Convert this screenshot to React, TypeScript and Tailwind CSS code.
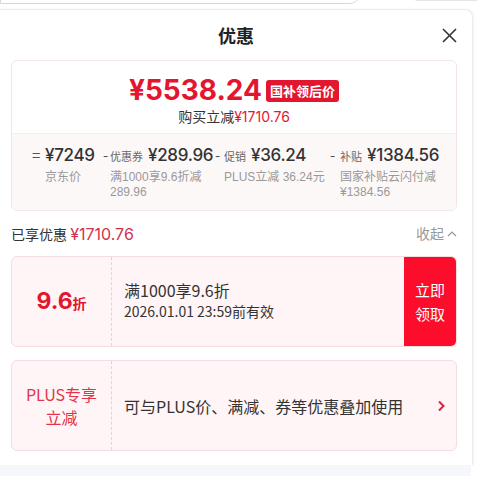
import React from "react";

const CJK = '"Noto Sans CJK SC", "Noto Sans", sans-serif';
const NUM = 'Inter, "Noto Sans CJK SC", sans-serif';
const DESC = '"Liberation Sans", "Noto Sans CJK SC", sans-serif';

function Col({ op, opW, label, value, desc, w }: { op: string; opW: number; label?: string; value: string; desc: string[]; w: number }) {
  return (
    <div className="flex flex-col shrink-0" style={{ width: w }}>
      <div className="flex items-baseline h-[24px] whitespace-nowrap">
        <span className="text-[15px] text-[#555] shrink-0" style={{ width: opW }}>{op}</span>
        {label && <span className="text-[11px] text-[#666] mr-[5px]">{label}</span>}
        <span className="text-[17px] font-medium tracking-[-0.3px] text-[#333]" style={{ fontFamily: NUM }}>{value}</span>
      </div>
      <div className="flex flex-col mt-[3px]" style={{ marginLeft: opW, fontFamily: DESC }}>
        {desc.map((d) => (
          <span key={d} className="block h-[15px] text-[12px] leading-[15px] text-[#999] whitespace-nowrap">{d}</span>
        ))}
      </div>
    </div>
  );
}

export default function App() {
  return (
    <div className="w-[477px] h-[490px] bg-white overflow-hidden relative" style={{ fontFamily: CJK }}>
      <div className="h-[9px] relative">
        <div className="absolute left-0 top-[-20px] w-[360px] h-[24px] border border-[#d8d8d8] rounded-br-[10px]" />
        <div className="absolute left-[410px] top-[-20px] w-[80px] h-[21px] border border-[#e4e4e4] rounded-bl-[8px]" />
      </div>
      <div className="w-[473px] h-[456px] bg-white rounded-tr-[8px] border-t border-r border-[#ececec] shadow-[1px_0_3px_rgba(0,0,0,0.05)]">
        <div className="h-[50px] relative flex items-center justify-center">
          <span className="text-[18px] font-bold text-[#222]">优惠</span>
          <svg className="absolute left-[442px] top-[18px]" width="15" height="15" viewBox="0 0 15 15">
            <path d="M1 1 L14 14 M14 1 L1 14" stroke="#333" strokeWidth="1.6" fill="none" />
          </svg>
        </div>
        <div className="ml-[11px] w-[446px] border border-[#f1e6e8] rounded-[6px] overflow-hidden">
          <div className="h-[72px] flex flex-col items-center pt-[13px]">
            <div className="flex items-center">
              <span className="text-[28px] leading-[32px] font-bold text-[#e3162f]" style={{ fontFamily: NUM }}>¥5538.24</span>
              <span className="ml-[4px] mt-[2px] h-[22px] px-[4px] rounded-[3px] bg-[#e3162f] text-white text-[13px] font-bold leading-[22px]">国补领后价</span>
            </div>
            <div className="text-[14px] leading-[18px] text-[#333] mt-[1px]">
              购买立减<span className="text-[#e3162f]" style={{ fontFamily: NUM }}>¥1710.76</span>
            </div>
          </div>
          <div className="h-[77px] bg-[#fdf8f8] border-t border-[#f6eded] flex pl-[20px] pt-[9px]">
            <Col op="=" opW={13} value="¥7249" desc={["京东价"]} w={71} />
            <Col op="-" opW={7} label="优惠券" value="¥289.96" desc={["满1000享9.6折减", "289.96"]} w={112} />
            <Col op="-" opW={9} label="促销" value="¥36.24" desc={["PLUS立减 36.24元"]} w={115} />
            <Col op="-" opW={10} label="补贴" value="¥1384.56" desc={["国家补贴云闪付减", "¥1384.56"]} w={110} />
          </div>
        </div>
        <div className="h-[45px] ml-[11px] w-[446px] flex items-center justify-between">
          <span className="text-[14px] text-[#333]">
            已享优惠 <span className="text-[#d4314b] text-[16px]" style={{ fontFamily: NUM }}>¥1710.76</span>
          </span>
          <span className="text-[14px] text-[#999] flex items-center">
            收起
            <svg className="ml-[3px]" width="10" height="7" viewBox="0 0 10 7">
              <path d="M1 6 L5 2 L9 6" stroke="#999" strokeWidth="1.2" fill="none" />
            </svg>
          </span>
        </div>
        <div className="ml-[11px] w-[446px] h-[91px] border border-[#f3dde2] bg-[#fff5f6] rounded-[6px] flex overflow-hidden">
          <div className="w-[100px] flex items-center justify-center border-r border-dashed border-[#ead0d5]">
            <span className="text-[#e3162f] font-bold flex items-baseline" style={{ fontFamily: NUM }}>
              <span className="text-[23px]">9.6</span>
              <span className="text-[14px]" style={{ fontFamily: CJK }}>折</span>
            </span>
          </div>
          <div className="flex-1 flex flex-col justify-center pl-[12px] text-[#333] pb-[3px]">
            <div className="text-[16px] leading-[22px]">满1000享9.6折</div>
            <div className="text-[14px] leading-[20px]">2026.01.01 23:59前有效</div>
          </div>
          <div className="w-[52px] bg-[#fb0d2b] flex items-center justify-center text-white text-[15px] leading-[24px] text-center">
            立即<br />领取
          </div>
        </div>
        <div className="ml-[11px] mt-[13px] w-[446px] h-[91px] border border-[#f3dde2] bg-[#fff5f6] rounded-[6px] flex overflow-hidden">
          <div className="w-[100px] flex items-center justify-center border-r border-dashed border-[#ead0d5] text-center text-[#e3334a] text-[16px] leading-[23px]">
            PLUS专享<br />立减
          </div>
          <div className="flex-1 flex items-center pl-[12px] text-[16px] text-[#333]">可与PLUS价、满减、券等优惠叠加使用</div>
          <div className="w-[30px] flex items-center justify-center">
            <svg width="8" height="12" viewBox="0 0 8 12">
              <path d="M2 1.5 L6.5 6 L2 10.5" stroke="#d8233f" strokeWidth="2" fill="none" />
            </svg>
          </div>
        </div>
      </div>
      <div className="w-[471px] h-[11px] bg-[#f6f7fb]" />
    </div>
  );
}
